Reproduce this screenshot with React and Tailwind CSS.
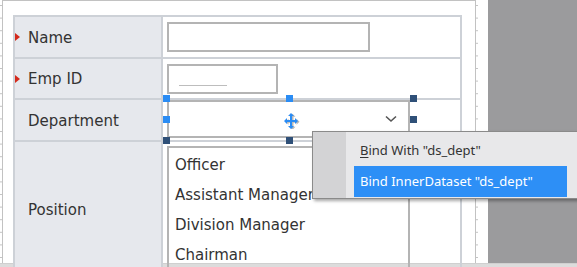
import React from 'react';

const rows = [
  { label: 'Name', required: true, h: 'h-[42px]' },
  { label: 'Emp ID', required: true, h: 'h-[41px]' },
  { label: 'Department', required: false, h: 'h-[42px]' },
];

const positions = ['Officer', 'Assistant Manager', 'Division Manager', 'Chairman'];

const Ruler = ({ className }) => (
  <svg className={className} width="3" height="263">
    {Array.from({ length: 21 }).map((_, i) => (
      <rect key={i} x="0" y={5 + i * 12.6} width="2" height="1" fill="#c4c4c4" />
    ))}
  </svg>
);

const Handle = ({ x, y, dark }) => (
  <div
    className={`absolute w-[7px] h-[7px] ${dark ? 'bg-[#2f5078]' : 'bg-[#2a8cf4]'}`}
    style={{ left: x, top: y }}
  />
);

const MoveIcon = () => (
  <svg width="17" height="16" viewBox="0 0 17 16" className="absolute left-[283px] top-[113px]">
    <path
      d="M8 0 L11 3 L9 3 L9 7 L12 7 L12 5 L15 8 L12 11 L12 9 L9 9 L9 13 L11 13 L8 16 L5 13 L7 13 L7 9 L4 9 L4 11 L1 8 L4 5 L4 7 L7 7 L7 3 L5 3 Z"
      fill="#b8b8b8"
      transform="translate(1.5 0.8)"
    />
    <path
      d="M8 0 L11 3 L9 3 L9 7 L12 7 L12 5 L15 8 L12 11 L12 9 L9 9 L9 13 L11 13 L8 16 L5 13 L7 13 L7 9 L4 9 L4 11 L1 8 L4 5 L4 7 L7 7 L7 3 L5 3 Z"
      fill="#2a8cf4"
    />
  </svg>
);

const Label = ({ text, required }) => (
  <div className="relative flex items-center h-full bg-[#e6e8ed] pl-[13px] pt-[2px] text-[15px] text-[#333]">
    {required && (
      <span className="absolute left-0 top-1/2 -translate-y-1/2 w-0 h-0 border-y-[4px] border-y-transparent border-l-[5px] border-l-[#d42a1c]" />
    )}
    {text}
  </div>
);

export default function App() {
  return (
    <div
      className="relative w-[577px] h-[267px] overflow-hidden bg-white flex flex-col"
      style={{ fontFamily: '"DejaVu Sans", Verdana, sans-serif' }}
    >
      <div className="flex h-[263px]">
        <div className="relative w-[488px] h-full bg-white">
          <Ruler className="absolute left-0 top-0" />
          <Ruler className="absolute left-[476px] top-0" />
          <div className="ml-[2px] w-[474px] h-full border-l border-t border-r border-[#c2c2c2]">
            <div className="ml-[10px] mt-[14px] w-[449px] border-t-2 border-l-2 border-r-2 border-[#cdd1d7]">
              {rows.map((r, i) => (
                <div key={r.label} className={`grid grid-cols-[148px_1fr] ${r.h} border-b-2 border-[#cdd1d7]`}>
                  <div className="border-r-2 border-[#cdd1d7]">
                    <Label text={r.label} required={r.required} />
                  </div>
                  <div className="flex items-center pl-[4px]">
                    {i === 0 && <div className="w-[203px] h-[30px] border-2 border-[#b4b4b4]" />}
                    {i === 1 && (
                      <div className="w-[111px] h-[30px] border-2 border-[#b4b4b4] flex items-end pl-[10px] pb-[6px]">
                        <div className="w-[48px] h-px bg-[#bdbdbd]" />
                      </div>
                    )}
                    {i === 2 && (
                      <div className="w-[243px] h-[38px] -mt-[2px] border-2 border-[#b4b4b4] flex items-center justify-end pr-[11px]">
                        <svg width="12" height="8" viewBox="0 0 12 8">
                          <path d="M1 1.5 L6 6 L11 1.5" fill="none" stroke="#555" strokeWidth="1.6" />
                        </svg>
                      </div>
                    )}
                  </div>
                </div>
              ))}
              <div className="grid grid-cols-[148px_1fr] grid-rows-[134px] h-[134px] overflow-hidden">
                <div className="border-r-2 border-[#cdd1d7]">
                  <Label text="Position" required={false} />
                </div>
                <div className="pl-[4px] pt-[4px]">
                  <div className="w-[243px] h-[130px] border-2 border-[#b4b4b4] pl-[6px] pt-[2px]">
                    {positions.map((p) => (
                      <div key={p} className="h-[30px] flex items-center text-[15px] text-[#333]">
                        {p}
                      </div>
                    ))}
                  </div>
                </div>
              </div>
            </div>
          </div>
          <Handle x={163} y={95} />
          <Handle x={286} y={95} />
          <Handle x={410} y={95} dark />
          <Handle x={163} y={116} />
          <Handle x={410} y={116} dark />
          <Handle x={163} y={137} dark />
          <Handle x={286} y={137} dark />
          <MoveIcon />
        </div>
        <div className="flex-1 h-full bg-[#9b9b9d]" />
      </div>
      <div className="h-[4px] bg-[#dcdcdc] border-t border-[#d0d0d0]" />

      <div
        className="absolute left-[312px] top-[131px] w-[280px] h-[68px] flex bg-[#e8e8ea] border border-[#8a8a8a] shadow-[2px_2px_3px_rgba(0,0,0,0.35)]"
        style={{ fontFamily: '"Noto Sans", "Open Sans", sans-serif' }}
      >
        <div className="w-[33px] h-full bg-[#d3d3d5]" />
        <div className="flex flex-col pl-[8px] pt-[2px] text-[13px]">
          <div className="h-[32px] flex items-center pl-[6px] pt-[2px] text-[#333]">
            <span className="underline underline-offset-2">B</span>ind With "ds_dept"
          </div>
          <div className="w-[213px] h-[31px] flex items-center pl-[6px] bg-[#2d8ff6] text-white">
            Bind InnerDataset "ds_dept"
          </div>
        </div>
      </div>
    </div>
  );
}
